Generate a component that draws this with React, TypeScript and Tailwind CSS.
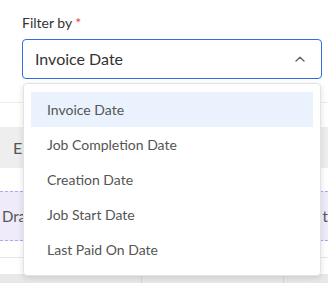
import React from "react";

const items = [
  "Invoice Date",
  "Job Completion Date",
  "Creation Date",
  "Job Start Date",
  "Last Paid On Date",
];

export default function App() {
  return (
    <div
      className="relative w-[328px] h-[283px] overflow-hidden bg-white"
      style={{ fontFamily: "Lato, 'Open Sans', sans-serif" }}
    >
      <div className="pt-[12px] px-[22px]">
        <div className="flex items-center h-[20px] text-[14px] text-[#333]">
          Filter by<span className="ml-[3px] text-[#f44336]">*</span>
        </div>
        <div className="mt-[7px] h-[40px] w-[300px] rounded-[4px] border border-[#2f6fe0] flex items-center justify-between pl-[12px] pr-[16px]">
          <span className="text-[16px] text-[#333]">Invoice Date</span>
          <svg width="10" height="6" viewBox="0 0 10 6" fill="none">
            <path d="M1 5L5 1.2L9 5" stroke="#666" strokeWidth="1.4" strokeLinecap="round" strokeLinejoin="round" />
          </svg>
        </div>
      </div>
      {/* background content */}
      <div className="mt-[23px] border-t border-[#ececec]">
        <div className="h-[24px]" />
        <div className="h-[41px] bg-[#eeeeee] flex items-center pl-[13px] text-[16px] text-[#555]">E</div>
        <div className="h-[23px]" />
        <div className="h-[50px] bg-[#efebfb] border-y border-dashed border-[#b6a6ee] flex items-center justify-between pl-[2px] pr-[0px] text-[15px] text-[#555]">
          <span>Dra</span>
          <span>t</span>
        </div>
        <div className="h-[16px]" />
        <div className="border-t border-[#e6e6e6] h-[17px]" />
        <div className="h-[20px] bg-[#e8e8e8] grid grid-cols-[142px_142px_1fr]">
          <div className="border-r border-[#d6d6d6]" />
          <div className="border-r border-[#d6d6d6]" />
          <div />
        </div>
      </div>
      {/* dropdown menu */}
      <div className="absolute left-[23px] top-[83px] w-[298px] rounded-[4px] border border-[#e3e3e3] bg-white shadow-[0_2px_6px_rgba(0,0,0,0.12)] py-[8px] px-[7px]">
        {items.map((it, i) => (
          <div
            key={it}
            className={
              i === 0
                ? "h-[35px] flex items-center pl-[16px] text-[14px] text-[#555] bg-[#eaf2fd]"
                : "h-[35px] flex items-center pl-[16px] text-[14px] text-[#555]"
            }
          >
            {it}
          </div>
        ))}
      </div>
    </div>
  );
}
